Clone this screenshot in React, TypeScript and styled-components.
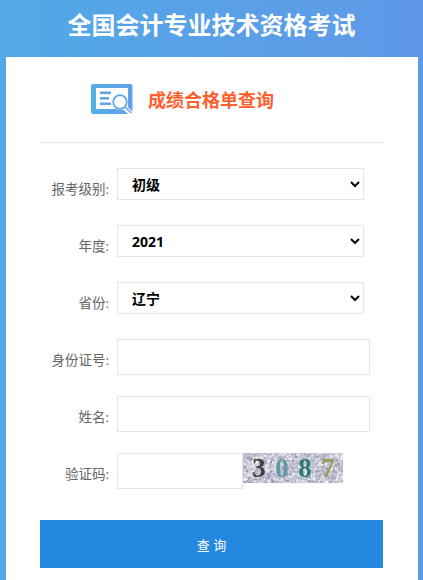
import React from "react";
import styled, { createGlobalStyle } from "styled-components";

const FONT = `"Open Sans", "Noto Sans CJK SC", sans-serif`;

const GlobalStyle = createGlobalStyle`
    html, body {
        margin: 0;
        padding: 0;
        height: 580px;
        overflow: hidden;
        background: #fff;
        font-family: ${FONT};
    }
    * {
        box-sizing: border-box;
    }
`;

// 验证码的噪点，固定种子，每次画出来都一样
function makeNoise() {
    const dots: { x: number; y: number; c: string; s: number }[] = [];
    const colors = ["#a3a6bb", "#e4e5ee", "#b4b6c8", "#f4f4f8", "#9497ab", "#d2d4e0"];
    let seed = 17;
    const next = () => {
        seed = (seed * 9301 + 49297) % 233280;
        return seed / 233280;
    };
    for (let i = 0; i < 900; i++) {
        dots.push({
            x: next() * 100,
            y: next() * 30,
            c: colors[Math.floor(next() * colors.length)],
            s: 1 + next() * 1.4,
        });
    }
    return dots;
}

const NOISE = makeNoise();

const SELECTS = [
    { label: "报考级别:", value: "初级" },
    { label: "年度:", value: "2021" },
    { label: "省份:", value: "辽宁" },
];

const INPUTS = ["身份证号:", "姓名:"];

export default function App() {
    return (
        <Page>
            <GlobalStyle />
            <Header>全国会计专业技术资格考试</Header>
            <Panel>
                <TitleRow>
                    <QueryIcon />
                    <Title>成绩合格单查询</Title>
                </TitleRow>
                <Form>
                    {SELECTS.map((item) => (
                        <SelectRow key={item.label}>
                            <Label>{item.label}</Label>
                            <Select defaultValue={item.value}>
                                <option>{item.value}</option>
                            </Select>
                        </SelectRow>
                    ))}
                    {INPUTS.map((label) => (
                        <InputRow key={label}>
                            <Label>{label}</Label>
                            <TextInput />
                        </InputRow>
                    ))}
                    <InputRow>
                        <Label>验证码:</Label>
                        <CodeInput />
                        <Captcha />
                    </InputRow>
                    <SubmitButton type="button">查 询</SubmitButton>
                </Form>
            </Panel>
        </Page>
    );
}

function QueryIcon() {
    return (
        <svg width="42" height="31" viewBox="0 0 42 31" style={{ flex: "none" }}>
            <defs>
                <linearGradient id="iconFill" x1="0" y1="0" x2="1" y2="0">
                    <stop offset="0" stopColor="#54aee6" />
                    <stop offset="1" stopColor="#62a0ea" />
                </linearGradient>
            </defs>
            <rect x="0" y="0" width="41.5" height="30" rx="2" fill="url(#iconFill)" />
            <rect x="5" y="4" width="32" height="21" fill="#fff" />
            <rect x="9" y="7.5" width="11" height="2.6" fill="#62a6e8" />
            <rect x="9" y="13" width="9" height="2.6" fill="#62a6e8" />
            <rect x="9" y="18.5" width="11" height="2.6" fill="#62a6e8" />
            <path d="M33 23 L42 31" stroke="#fff" strokeWidth="5" />
            <circle cx="29" cy="18" r="8" fill="#fff" />
            <circle cx="29" cy="18" r="6.8" fill="#fff" stroke="#62a6e8" strokeWidth="1.8" />
            <path d="M34 23 L40.5 29" stroke="#7fb4ec" strokeWidth="1.8" />
        </svg>
    );
}

function Captcha() {
    return (
        <CaptchaFrame>
            <svg width="100" height="30" viewBox="0 0 100 30" style={{ display: "block" }}>
                <rect width="100" height="30" fill="#c4c6d4" />
                {NOISE.map((d, i) => (
                    <rect key={i} x={d.x} y={d.y} width={d.s} height={d.s} fill={d.c} />
                ))}
            </svg>
            <CaptchaDigits>
                <CaptchaDigit $color="#4a3a3a">3</CaptchaDigit>
                <CaptchaDigit $color="#5f97a3">0</CaptchaDigit>
                <CaptchaDigit $color="#2c7a70">8</CaptchaDigit>
                <CaptchaDigit $color="#9a9c5c">7</CaptchaDigit>
            </CaptchaDigits>
        </CaptchaFrame>
    );
}

const Page = styled.div`
    width: 423px;
    height: 580px;
    overflow: hidden;
    padding: 0 5px 0 6px;
    background: linear-gradient(90deg, #52a9e5 0%, #5f98e8 100%);
`;

const Header = styled.div`
    height: 57px;
    padding-top: 6px;
    color: #fff;
    font-size: 24px;
    line-height: 37px;
    font-weight: 700;
    text-align: center;
    white-space: nowrap;
    text-indent: -1px;
`;

const Panel = styled.div`
    height: 523px;
    padding: 0 35px 0 34px;
    background: #fff;
`;

const TitleRow = styled.div`
    display: flex;
    align-items: center;
    gap: 15px;
    height: 86px;
    padding: 0 0 1px 51px;
    border-bottom: 1px solid #e6e6e6;
`;

const Title = styled.div`
    color: #ff5f2e;
    font-size: 18px;
    font-weight: 700;
    white-space: nowrap;
`;

const Form = styled.form`
    display: flex;
    flex-direction: column;
    padding-top: 25px;
`;

const SelectRow = styled.div`
    display: flex;
    height: 32px;
    margin-bottom: 25px;
`;

const InputRow = styled.div`
    display: flex;
    height: 36px;
    margin-bottom: 21px;
`;

const Label = styled.label`
    flex: none;
    width: 77px;
    padding: 13px 8px 0 0;
    color: #666;
    font-size: 13.5px;
    line-height: 16px;
    text-align: right;
    white-space: nowrap;
`;

const Select = styled.select`
    width: 247px;
    height: 32px;
    padding: 0 0 0 10px;
    border: 1px solid #e6e6e6;
    border-radius: 0;
    background: #fff;
    color: #000;
    font-family: ${FONT};
    font-size: 14px;
    font-weight: 700;
    outline: none;
`;

const TextInput = styled.input`
    width: 253px;
    height: 36px;
    border: 1px solid #e6e6e6;
    background: #fff;
    outline: none;
`;

const CodeInput = styled(TextInput)`
    width: 126px;
`;

const CaptchaFrame = styled.div`
    position: relative;
    flex: none;
    width: 100px;
    height: 30px;
`;

const CaptchaDigits = styled.div`
    position: absolute;
    inset: 0;
    display: flex;
    align-items: center;
    gap: 9px;
    padding-left: 9px;
`;

const CaptchaDigit = styled.span<{ $color: string }>`
    width: 14px;
    color: ${(props) => props.$color};
    font-family: "Liberation Serif", serif;
    font-size: 27px;
    font-weight: 700;
    line-height: 30px;
    text-align: center;
    filter: blur(0.4px);
`;

const SubmitButton = styled.button`
    height: 48px;
    margin-top: 10px;
    border: 0;
    background: #2488e0;
    color: #fff;
    font-family: ${FONT};
    font-size: 13px;
`;
